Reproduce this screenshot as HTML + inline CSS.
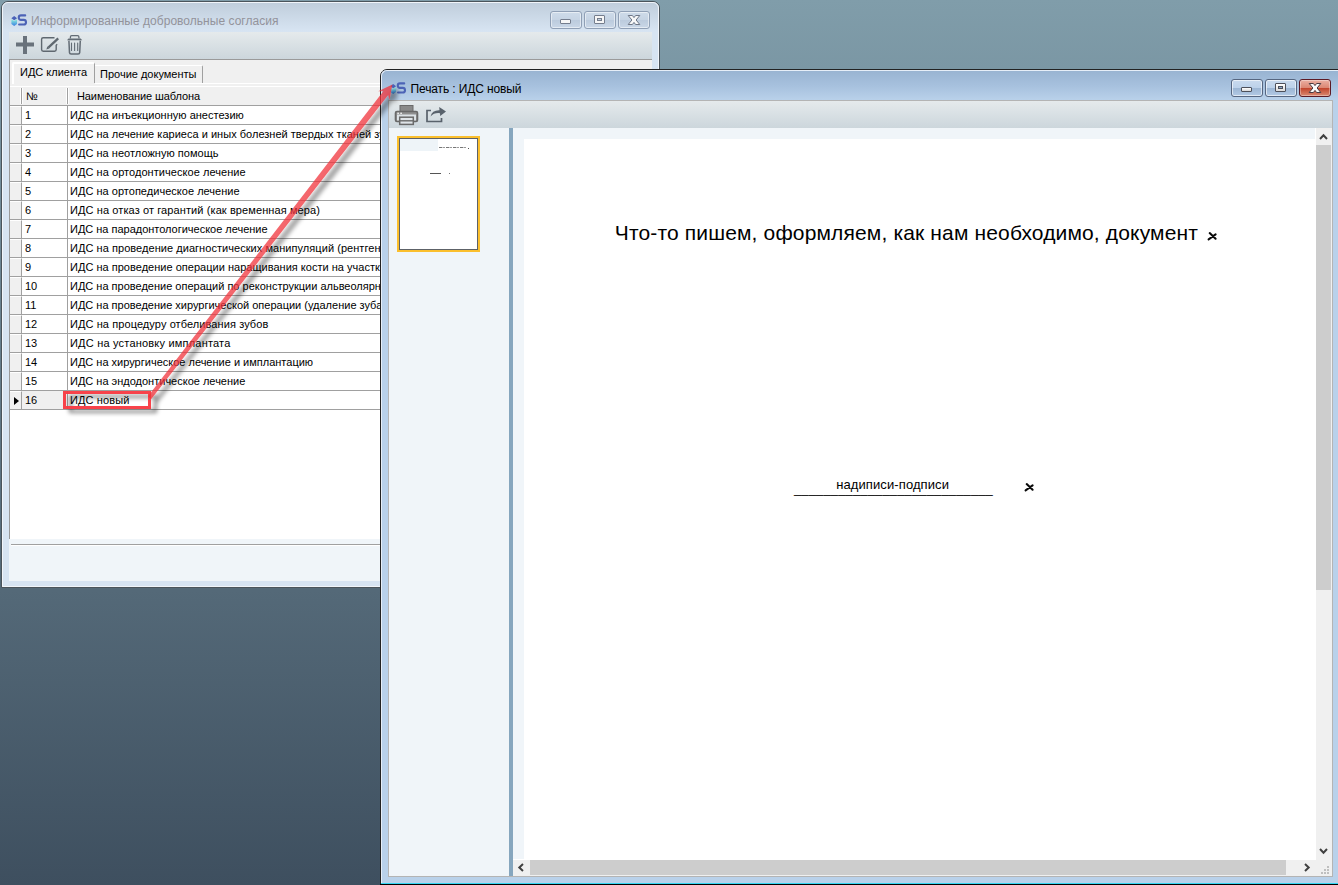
<!DOCTYPE html>
<html lang="ru">
<head>
<meta charset="utf-8">
<title>Информированные добровольные согласия</title>
<style>
*{box-sizing:border-box;margin:0;padding:0}
html,body{width:1338px;height:885px;overflow:hidden}
body{position:relative;font-family:"Liberation Sans","DejaVu Sans",sans-serif;font-size:11px;color:#000;
 background:linear-gradient(to bottom,#809daa 0px,#3e4f5f 885px)}
div,span,svg{position:absolute}
.t,.n,.txt{white-space:nowrap}
/* ---------- window 1 (inactive) ---------- */
#w1{left:1px;top:1px;width:659px;height:587px;border:1px solid #4b545b;border-radius:7px 7px 1px 1px;
 background:linear-gradient(to bottom,#bfcddb 0px,#d7e4f2 29px,#d7e4f2 100%);overflow:hidden}
#w1hl{left:2px;top:2px;width:657px;height:585px;border:1px solid #f1f5fa;border-radius:6px 6px 0 0}
#w1title{left:31px;top:13px;font-size:12px;line-height:16px;color:#93939b;letter-spacing:0.03px}
.cap{height:18px;width:32px;border:1px solid #8f9fb5;border-radius:3px;
 background:linear-gradient(to bottom,#cedbe9 0,#c6d4e4 48%,#bccbdd 52%,#c9d7e7 100%);box-shadow:inset 0 0 0 1px rgba(255,255,255,.5)}
.capa{height:18px;width:32px;border:1px solid #566680;border-radius:3px;
 background:linear-gradient(to bottom,#c9daee 0,#bdd2ea 47%,#9bb5d3 50%,#b3cae5 100%);box-shadow:inset 0 0 0 1px rgba(255,255,255,.6)}
.capx{height:18px;width:32px;border:1px solid #5c1a25;border-radius:3px;
 background:linear-gradient(to bottom,#ebb0a2 0,#dc8874 47%,#c1432a 50%,#d98972 100%);box-shadow:inset 0 0 0 1px rgba(255,255,255,.35)}
.tb{background:linear-gradient(to bottom,#e5eaec 0,#ccd6dc 100%)}
#w1client{left:9px;top:59px;width:643px;height:522px;background:#f0f0f0;border-top:1px solid #9a9a9a;border-left:1px solid #9a9a9a}
#grid{left:10px;top:87px;width:642px;height:452px;background:#fff}
#gh{left:10px;top:86px;width:642px;height:20px;background:#f0f0f0;border-top:1px solid #fff;border-bottom:1px solid #a0a0a0}
.row{left:10px;width:642px;height:19px;border-bottom:1px solid #a0a0a0;line-height:18px}
.row .i{left:0;top:0;width:12px;height:18px;background:#f0f0f0;border-right:1px solid #a0a0a0;border-top:1px solid #fff}
.row .n{left:15px;top:0}
.row .t{left:60px;top:0}
.cur{left:4px;top:4.800px;width:0;height:0;border-left:5.500px solid #000;border-top:4.500px solid transparent;border-bottom:4.500px solid transparent}
.row .sel{left:12px;top:0;width:45px;height:18px;background:#f0f0f0}
/* ---------- window 2 (active) ---------- */
#w2{left:380px;top:69px;width:970px;height:816px;border:1px solid #222;border-radius:7px 0 0 0;
 background:linear-gradient(to bottom,#98b3d1 0px,#a7c1de 16px,#b9d1ea 30px,#b9d1ea 100%);overflow:hidden}
#w2hl{left:381px;top:70px;width:970px;height:813px;border-left:1px solid #e6eef8;border-top:1px solid #e6eef8;border-radius:6px 0 0 0}
#w2title{left:410.500px;top:81px;font-size:12px;line-height:16px;color:#000;letter-spacing:-0.12px}
#w2client{left:388px;top:100px;width:945px;height:777px;background:#f0f5f9;border:1px solid #b4b4b4}
</style>
</head>
<body>
<!-- ================= WINDOW 1 : Информированные добровольные согласия ================= -->
<div id="w1"></div>
<div id="w1hl"></div>
<svg id="ico1" style="left:11px;top:13px" width="17" height="14" viewBox="0 0 17 14">
 <defs><linearGradient id="cg" x1="0" y1="0" x2="0" y2="1"><stop offset="0" stop-color="#8ff2dc"/><stop offset="1" stop-color="#3a7fe2"/></linearGradient></defs>
 <path d="M0.4 6.3 L3.2 8 L6 6.3 L6 10.9 L3.2 12.9 L0.4 10.9 Z" fill="url(#cg)"/>
 <path d="M0.3 5.2 L3.2 3.1 L6.1 5.2 L3.2 7.3 Z" fill="#4a62b8"/>
 <path d="M14.2 2.4 H10 A2.25 2.25 0 0 0 10 6.9 H12.7 A2.3 2.3 0 0 1 12.7 11.5 H8.1" fill="none" stroke="#4c63b6" stroke-width="2.1" stroke-linecap="round"/>
</svg>
<div id="w1title" class="txt">Информированные добровольные согласия</div>
<div class="cap" style="left:550px;top:11px"><span style="left:9px;top:7px;width:11px;height:5px;background:#f6f6f6;border:1px solid #747d8d;border-radius:1px"></span></div>
<div class="cap" style="left:584px;top:11px"><span style="left:9px;top:3px;width:11px;height:9px;background:#f6f6f6;border:1px solid #747d8d;border-radius:1px"></span><span style="left:12px;top:6px;width:5px;height:3px;background:#c3d1e0;border:1px solid #747d8d"></span></div>
<div class="cap" style="left:618px;top:11px"><svg style="left:8px;top:2px" width="14" height="12" viewBox="0 0 14 12"><path d="M1.2 1.5 L5.4 1.5 L7 3.6 L8.600 1.5 L12.8 1.5 L9.1 6 L12.8 10.5 L8.600 10.5 L7 8.4 L5.4 10.5 L1.2 10.5 L4.9 6 Z" fill="#f8f8f8" stroke="#6e7787" stroke-width="1" stroke-linejoin="round"/></svg></div>
<div class="tb" style="left:9px;top:32px;width:643px;height:27px"></div>
<!-- toolbar icons -->
<svg style="left:14px;top:35px" width="22" height="20" viewBox="0 0 22 20"><path d="M2 9.5 H20 M11 1 V19" stroke="#69727b" stroke-width="4" fill="none"/></svg>
<svg style="left:39px;top:35px" width="24" height="20" viewBox="0 0 24 20"><path d="M15.5 2.7 H4.2 Q2.6 2.7 2.6 4.300 V14.6 Q2.6 16.2 4.2 16.2 H15.6 Q17.2 16.2 17.2 14.6 V10.2 L18.2 9.300" stroke="#5f6870" stroke-width="1.4" fill="none"/><path d="M9.300 12.7 L19.2 3.300" stroke="#5f6870" stroke-width="2.3" fill="none"/><path d="M7.3 14.6 L8.4 11.6 L10.3 13.5 Z" fill="#5f6870"/></svg>
<svg style="left:65px;top:33px" width="20" height="24" viewBox="0 0 20 24"><path d="M5.4 5.6 V4 Q5.4 2.700 6.700 2.700 H12.6 Q13.9 2.700 13.9 4 V5.6" stroke="#636c75" stroke-width="1.3" fill="none"/><path d="M2 7.300 L3.500 5.600 H15.700 L17.200 7.300 Z" fill="#636c75"/><path d="M3.900 7.600 L4.500 19.600 Q4.600 21 6.100 21 H13.100 Q14.600 21 14.700 19.600 L15.300 7.600" stroke="#636c75" stroke-width="1.500" fill="none"/><path d="M6.500 10 V17.400 M9.600 10 V17.400 M12.700 10 V17.400" stroke="#636c75" stroke-width="1.100" stroke-linecap="round" fill="none"/></svg>
<div id="w1client"></div>
<!-- tabs -->
<div style="left:12px;top:62px;width:83px;height:21px;border-left:2px solid #fff;border-top:2px solid #fff;border-right:1px solid #a0a0a0;border-radius:2px 2px 0 0"></div>
<div style="left:95px;top:65px;width:108px;height:18px;border-top:1px solid #fff;border-right:1px solid #a0a0a0;border-radius:0 2px 0 0"></div>
<div class="txt" id="tab1" style="left:20px;top:65px;line-height:14px">ИДС клиента</div>
<div class="txt" id="tab2" style="left:100px;top:67px;line-height:14px">Прочие документы</div>
<div style="left:95px;top:83px;width:557px;height:1px;background:#fff"></div>
<div style="left:12px;top:83px;width:2px;height:1px;background:#fff"></div>
<div id="grid"></div>
<div id="gh"></div>
<div style="left:21px;top:88px;width:1px;height:16px;background:#a0a0a0;box-shadow:1px 0 0 #fff,-1px 0 0 #fff"></div>
<div style="left:67px;top:88px;width:1px;height:16px;background:#a0a0a0;box-shadow:1px 0 0 #fff,-1px 0 0 #fff"></div>
<div class="txt" id="hno" style="left:26px;top:89px;line-height:14px">№</div>
<div class="txt" id="hname" style="left:77px;top:89px;line-height:14px;letter-spacing:-0.1px">Наименование шаблона</div>
<div style="left:67px;top:106px;width:1px;height:304px;background:#a0a0a0"></div>
<div class="row" style="top:106px"><div class="i"></div><div class="n">1</div><div class="t" id="r1" style="letter-spacing:0.024px">ИДС на инъекционную анестезию</div></div>
<div class="row" style="top:125px"><div class="i"></div><div class="n">2</div><div class="t" id="r2" style="letter-spacing:0.02px">ИДС на лечение кариеса и иных болезней твердых тканей зубов</div></div>
<div class="row" style="top:144px"><div class="i"></div><div class="n">3</div><div class="t" id="r3" style="letter-spacing:0.033px">ИДС на неотложную помощь</div></div>
<div class="row" style="top:163px"><div class="i"></div><div class="n">4</div><div class="t" id="r4" style="letter-spacing:0.053px">ИДС на ортодонтическое лечение</div></div>
<div class="row" style="top:182px"><div class="i"></div><div class="n">5</div><div class="t" id="r5" style="letter-spacing:0.024px">ИДС на ортопедическое лечение</div></div>
<div class="row" style="top:201px"><div class="i"></div><div class="n">6</div><div class="t" id="r6" style="letter-spacing:0.1px">ИДС на отказ от гарантий (как временная мера)</div></div>
<div class="row" style="top:220px"><div class="i"></div><div class="n">7</div><div class="t" id="r7" style="letter-spacing:-0.015px">ИДС на парадонтологическое лечение</div></div>
<div class="row" style="top:239px"><div class="i"></div><div class="n">8</div><div class="t" id="r8" style="letter-spacing:0.05px">ИДС на проведение диагностических манипуляций (рентгенография)</div></div>
<div class="row" style="top:258px"><div class="i"></div><div class="n">9</div><div class="t" id="r9" style="letter-spacing:0.02px">ИДС на проведение операции наращивания кости на участке челюсти</div></div>
<div class="row" style="top:277px"><div class="i"></div><div class="n">10</div><div class="t" id="r10">ИДС на проведение операций по реконструкции альвеолярного отростка</div></div>
<div class="row" style="top:296px"><div class="i"></div><div class="n">11</div><div class="t" id="r11">ИДС на проведение хирургической операции (удаление зуба)</div></div>
<div class="row" style="top:315px"><div class="i"></div><div class="n">12</div><div class="t" id="r12" style="letter-spacing:0.085px">ИДС на процедуру отбеливания зубов</div></div>
<div class="row" style="top:334px"><div class="i"></div><div class="n">13</div><div class="t" id="r13" style="letter-spacing:0.2px">ИДС на установку имплантата</div></div>
<div class="row" style="top:353px"><div class="i"></div><div class="n">14</div><div class="t" id="r14">ИДС на хирургическое лечение и имплантацию</div></div>
<div class="row" style="top:372px"><div class="i"></div><div class="n">15</div><div class="t" id="r15">ИДС на эндодонтическое лечение</div></div>
<div class="row" style="top:391px"><div class="i"><span class="cur"></span></div><div class="sel"></div><div class="n">16</div><div class="t" id="r16" style="letter-spacing:0.12px">ИДС новый</div></div>
<div style="left:9px;top:539px;width:643px;height:42px;background:#f0f5f9"></div>
<div style="left:11px;top:544px;width:641px;height:2px;background:#fff;border-top:1px solid #a0a0a0"></div>
<!-- ================= WINDOW 2 : Печать ================= -->
<div id="w2"></div>
<div id="w2hl"></div>
<svg id="ico2" style="left:390px;top:81px" width="17" height="14" viewBox="0 0 17 14">
 <path d="M0.4 6.3 L3.2 8 L6 6.3 L6 10.9 L3.2 12.9 L0.4 10.9 Z" fill="url(#cg)"/>
 <path d="M0.3 5.2 L3.2 3.1 L6.1 5.2 L3.2 7.3 Z" fill="#4a62b8"/>
 <path d="M14.2 2.4 H10 A2.25 2.25 0 0 0 10 6.9 H12.7 A2.3 2.3 0 0 1 12.7 11.5 H8.1" fill="none" stroke="#4c63b6" stroke-width="2.1" stroke-linecap="round"/>
</svg>
<div id="w2title" class="txt">Печать : ИДС новый</div>
<div class="capa" style="left:1231px;top:79px"><span style="left:9px;top:7px;width:11px;height:5px;background:linear-gradient(#fff,#d8d8d8);border:1px solid #4d505a;border-radius:1px"></span></div>
<div class="capa" style="left:1265px;top:79px"><span style="left:9px;top:3px;width:11px;height:9px;background:linear-gradient(#fff,#dcdcdc);border:1px solid #4d505a;border-radius:1px"></span><span style="left:12px;top:6px;width:5px;height:3px;background:#8ea9c9;border:1px solid #4d505a"></span></div>
<div class="capx" style="left:1299px;top:79px"><svg style="left:8px;top:2px" width="14" height="12" viewBox="0 0 14 12"><path d="M1.2 1.5 L5.4 1.5 L7 3.6 L8.600 1.5 L12.8 1.5 L9.1 6 L12.8 10.5 L8.600 10.5 L7 8.4 L5.4 10.5 L1.2 10.5 L4.9 6 Z" fill="#fafafa" stroke="#4b3a40" stroke-width="1" stroke-linejoin="round"/></svg></div>
<div id="w2client"></div>
<div class="tb" style="left:389px;top:101px;width:943px;height:27px"></div>
<!-- printer -->
<svg style="left:394px;top:104px" width="26" height="22" viewBox="0 0 26 22"><rect x="6" y="1.5" width="13" height="6" fill="#8a8a8a" stroke="#6a6a6a" stroke-width="1"/><rect x="1.5" y="7.5" width="22" height="10" rx="1.5" fill="#8f8f8f" stroke="#696969" stroke-width="1.6"/><rect x="3" y="10.5" width="19" height="6" fill="#dde3e7"/><rect x="3.4" y="8.6" width="1.4" height="1.4" fill="#fff"/><rect x="6.4" y="8.6" width="1.4" height="1.4" fill="#fff"/><rect x="5.7" y="13.2" width="13.6" height="7.2" fill="#dfe4e8" stroke="#6a6a6a" stroke-width="1.5"/><path d="M6 16.8 H19" stroke="#6a6a6a" stroke-width="1.4"/></svg>
<!-- export -->
<svg style="left:425px;top:105px" width="24" height="20" viewBox="0 0 24 20"><path d="M6 5.5 H2 V16.5 H16.5 V13" stroke="#59626c" stroke-width="1.7" fill="none"/><path d="M5.5 11.5 Q7 5 14.5 5.2 L14.2 2 L21 6.5 L15.2 11 L15 8.2 Q9 7.6 5.5 11.5 Z" fill="#59626c"/></svg>
<!-- thumbnail -->
<div style="left:397px;top:136px;width:83px;height:116px;background:#fff;border:2px solid #fbbf2d"></div>
<div style="left:399px;top:138px;width:79px;height:112px;border:1px solid #5d6268"></div>
<div style="left:400px;top:139px;width:38px;height:12px;background:#eef4f8"></div>
<div style="left:439px;top:147px;width:28px;height:1px;background:repeating-linear-gradient(90deg,#777 0 3px,#ccc 3px 4px,#999 4px 6px,#fff 6px 7px)"></div>
<div style="left:468px;top:148px;width:1px;height:1px;background:#555"></div>
<div style="left:430px;top:173px;width:11px;height:1px;background:#555"></div>
<div style="left:449px;top:173px;width:1px;height:1px;background:#777"></div>
<!-- splitter -->
<div style="left:509px;top:128px;width:4px;height:748px;background:#86a6be"></div>
<!-- page -->
<div style="left:524px;top:139px;width:791px;height:720px;background:#fff"></div>
<div style="left:513px;top:859px;width:819px;height:1px;background:#fff"></div>
<div class="txt" id="doc1" style="left:614.8px;top:221px;font-size:21px;line-height:24px;letter-spacing:0.15px">Что-то пишем, оформляем, как нам необходимо, документ</div>
<div class="txt" id="doc2" style="left:836.2px;top:477px;font-size:13px;line-height:15px;letter-spacing:0.1px">надиписи-подписи</div>
<div class="txt" id="doc3" style="left:794px;top:481px;font-size:13px;line-height:15px;letter-spacing:0.14px">___________________________</div>
<svg style="left:1206px;top:231px" width="12" height="11" viewBox="0 0 12 11"><path d="M3.7 2.1 L9.6 7.7 M9.6 3.4 L2.6 8.300" stroke="#0a0a0a" stroke-width="2.1" stroke-linecap="round" fill="none"/></svg>
<svg style="left:1023.1px;top:482.1px" width="12" height="11" viewBox="0 0 12 11"><path d="M3.7 2.1 L9.6 7.7 M9.6 3.4 L2.6 8.300" stroke="#0a0a0a" stroke-width="2.1" stroke-linecap="round" fill="none"/></svg>
<!-- vertical scrollbar -->
<div style="left:1315px;top:128px;width:17px;height:732px;background:#f0f0f0;border-left:1px solid #fff"></div>
<div style="left:1316px;top:145px;width:15px;height:445px;background:#cdcdcd"></div>
<svg style="left:1319px;top:133px" width="9" height="8" viewBox="0 0 9 8"><path d="M1 6 L4.5 2.3 L8 6" stroke="#404040" stroke-width="2" fill="none"/></svg>
<svg style="left:1319px;top:846.500px" width="9" height="8" viewBox="0 0 9 8"><path d="M1 2 L4.5 5.7 L8 2" stroke="#404040" stroke-width="2" fill="none"/></svg>
<!-- horizontal scrollbar -->
<div style="left:513px;top:860px;width:819px;height:16px;background:#f0f0f0"></div>
<div style="left:530px;top:860px;width:756px;height:15px;background:#cdcdcd"></div>
<svg style="left:517px;top:863px" width="8" height="9" viewBox="0 0 8 9"><path d="M6 1 L2.3 4.5 L6 8" stroke="#404040" stroke-width="2" fill="none"/></svg>
<svg style="left:1303px;top:863px" width="8" height="9" viewBox="0 0 8 9"><path d="M2 1 L5.7 4.5 L2 8" stroke="#404040" stroke-width="2" fill="none"/></svg>
<!-- size grip -->
<svg style="left:1319px;top:865px" width="12" height="12" viewBox="0 0 12 12"><g fill="#bfbfbf"><rect x="8" y="1" width="2" height="2"/><rect x="5" y="4" width="2" height="2"/><rect x="8" y="4" width="2" height="2"/><rect x="2" y="7" width="2" height="2"/><rect x="5" y="7" width="2" height="2"/><rect x="8" y="7" width="2" height="2"/></g></svg>
<!-- bottom edge -->
<div style="left:381px;top:883px;width:957px;height:1px;background:#34d6f2"></div>
<div style="left:380px;top:884px;width:958px;height:1px;background:#000"></div>
<!-- ================= annotation overlay ================= -->
<svg id="ov" style="left:0;top:0" width="1338" height="885" viewBox="0 0 1338 885">
 <defs><filter id="sh" x="-5%" y="-5%" width="115%" height="115%"><feGaussianBlur in="SourceAlpha" stdDeviation="2.2"/><feOffset dx="6" dy="4"/><feComponentTransfer><feFuncA type="linear" slope="0.5"/></feComponentTransfer><feMerge><feMergeNode/><feMergeNode in="SourceGraphic"/></feMerge></filter></defs>
 <g filter="url(#sh)">
  <rect x="64.500" y="392.500" width="85" height="15" fill="none" stroke="#f83a42" stroke-opacity="0.95" stroke-width="3"/>
  <path d="M147.8 396.4 L383.3 91.3 L378.2 91.3 L392.4 84.6 L389.4 100 L388.2 95.1 L151.3 399 Z" fill="#f0323a" fill-opacity="0.74"/>
 </g>
</svg>
</body>
</html>
